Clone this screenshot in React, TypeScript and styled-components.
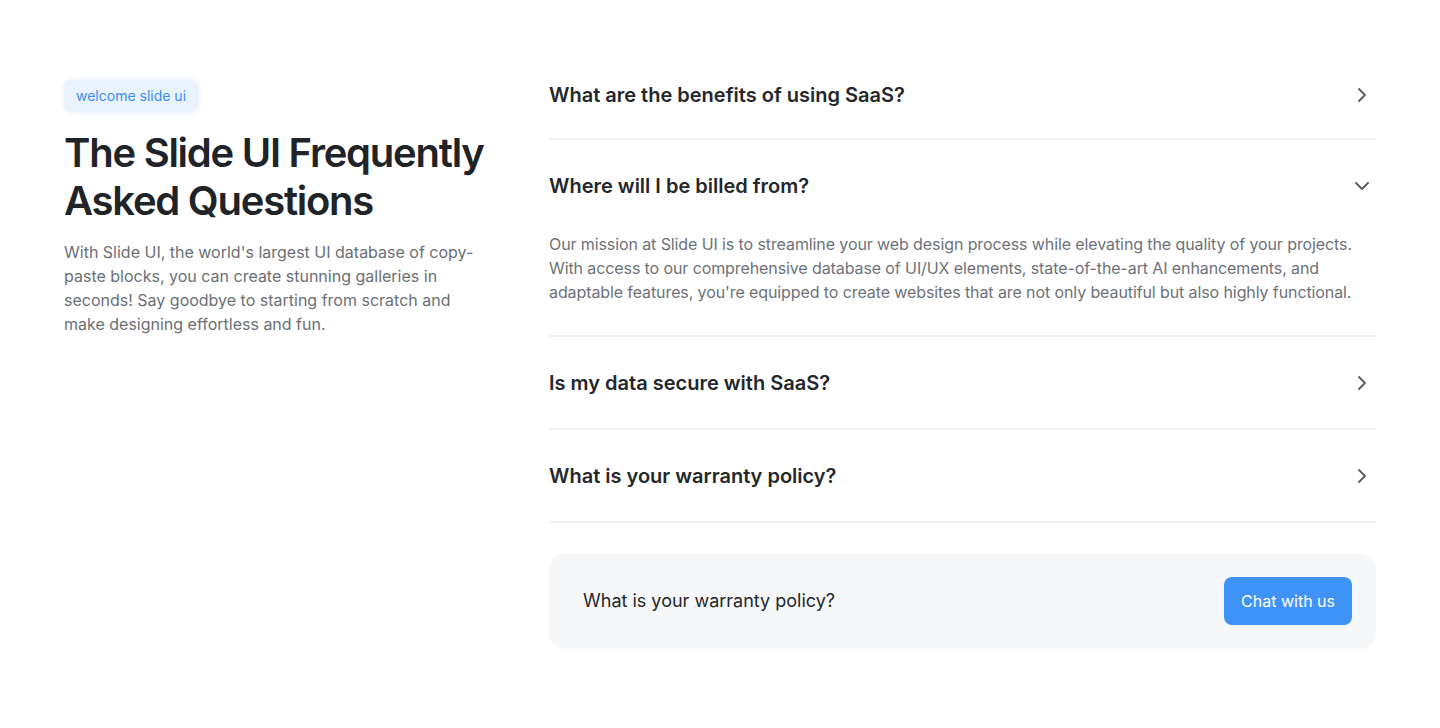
import React, { useState } from "react";
import styled, { createGlobalStyle } from "styled-components";

const GlobalStyle = createGlobalStyle`
  * { box-sizing: border-box; }
  html, body { margin: 0; padding: 0; background: #ffffff; }
  body { font-family: Inter, "Noto Sans", sans-serif; -webkit-font-smoothing: antialiased; }
`;

const Section = styled.section`
  width: 1440px;
  min-height: 728px;
  padding: 48px 64px 60px;
  display: grid;
  grid-template-columns: 436px 1fr;
  column-gap: 49px;
  align-items: start;
`;

const Intro = styled.div`
  display: flex;
  flex-direction: column;
  align-items: flex-start;
  padding-top: 32px;
`;

const Badge = styled.span`
  display: inline-flex;
  align-items: center;
  height: 32px;
  padding: 0 12px;
  border-radius: 8px;
  background: #e9f3fe;
  box-shadow: 0 0 5px rgba(120, 170, 230, 0.22);
  color: #3a8ff2;
  font-size: 14px;
  line-height: 20px;
`;

const Title = styled.h2`
  margin: 17px 0 0;
  font-size: 40px;
  line-height: 48px;
  font-weight: 600;
  letter-spacing: -1.25px;
  color: #202327;
`;

const Lead = styled.p`
  margin: 15px 0 0;
  font-size: 16px;
  line-height: 24px;
  color: #6b6f76;
  max-width: 420px;
`;

const List = styled.div`
  display: flex;
  flex-direction: column;
`;

const Item = styled.div`
  border-bottom: 2px solid #f0f1f3;
`;

const Trigger = styled.button<{ $first?: boolean }>`
  width: 100%;
  display: flex;
  align-items: center;
  justify-content: space-between;
  padding: ${(p) => (p.$first ? "33px 2px 29px 0" : "32px 2px 31px 0")};
  border: 0;
  background: transparent;
  cursor: pointer;
  text-align: left;
  font-family: inherit;
  font-size: 20px;
  line-height: 28px;
  font-weight: 600;
  color: #24272b;
`;

const Answer = styled.p`
  margin: 0;
  padding: 1px 0 31px;
  font-size: 16px;
  line-height: 24px;
  color: #6e7278;
  letter-spacing: -0.1px;
`;

const Cta = styled.div`
  margin-top: 31px;
  display: flex;
  align-items: center;
  justify-content: space-between;
  padding: 23px 24px 23px 34px;
  border-radius: 16px;
  background: #f6f7f9;
  box-shadow: 0 1px 3px rgba(0, 0, 0, 0.03);
`;

const CtaText = styled.span`
  font-size: 18px;
  line-height: 28px;
  color: #24272b;
`;

const ChatButton = styled.button`
  height: 48px;
  padding: 0 17px;
  border: 0;
  border-radius: 8px;
  background: #3f93f6;
  color: #ffffff;
  font-family: inherit;
  font-size: 16px;
  line-height: 24px;
  cursor: pointer;
  box-shadow: 0 1px 2px rgba(0, 0, 0, 0.05);
`;

const Chevron = ({ open }: { open: boolean }) => (
  <svg width="24" height="24" viewBox="0 0 24 24" fill="none" stroke="#5d6167" strokeWidth="2" strokeLinecap="round" strokeLinejoin="round">
    {open ? <path d="m6 9 6 6 6-6" /> : <path d="m9 18 6-6-6-6" />}
  </svg>
);

const faqs = [
  { q: "What are the benefits of using SaaS?", a: "" },
  {
    q: "Where will I be billed from?",
    a: "Our mission at Slide UI is to streamline your web design process while elevating the quality of your projects. With access to our comprehensive database of UI/UX elements, state-of-the-art AI enhancements, and adaptable features, you're equipped to create websites that are not only beautiful but also highly functional.",
  },
  { q: "Is my data secure with SaaS?", a: "" },
  { q: "What is your warranty policy?", a: "" },
];

export default function App() {
  const [open, setOpen] = useState(1);
  return (
    <>
      <GlobalStyle />
      <Section>
        <Intro>
          <Badge>welcome slide ui</Badge>
          <Title>
            The Slide UI Frequently
            <br />
            Asked Questions
          </Title>
          <Lead>
            With Slide UI, the world's largest UI database of copy-paste blocks, you can create stunning galleries in seconds! Say goodbye to starting from scratch and make designing effortless and fun.
          </Lead>
        </Intro>
        <List>
          {faqs.map((f, i) => (
            <Item key={f.q}>
              <Trigger $first={i === 0} onClick={() => setOpen(open === i ? -1 : i)}>
                {f.q}
                <Chevron open={open === i} />
              </Trigger>
              {open === i && <Answer>{f.a}</Answer>}
            </Item>
          ))}
          <Cta>
            <CtaText>What is your warranty policy?</CtaText>
            <ChatButton>Chat with us</ChatButton>
          </Cta>
        </List>
      </Section>
    </>
  );
}
